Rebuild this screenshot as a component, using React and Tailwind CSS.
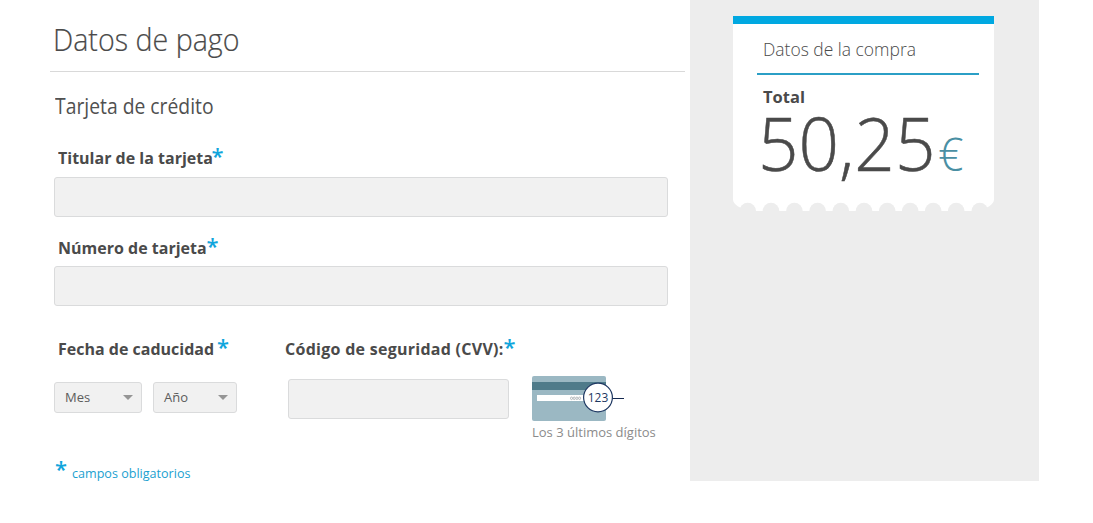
const FIELD = 'block rounded-[3px] border border-[#dadbdc] bg-[#f1f1f1] outline-none';

function Star() {
  return <span className="-mt-0.5 block text-[22px] leading-[22px] font-semibold text-[#10a5dc]">*</span>;
}

function Label({ children, width, tracking = '', htmlFor }) {
  return (
    <label htmlFor={htmlFor} className="flex h-6 items-start whitespace-nowrap text-[16.5px] leading-6 font-bold text-[#4a4a4a]">
      <span className={`block origin-left scale-x-[0.97] ${tracking} ${width}`}>{children}</span>
      <Star />
    </label>
  );
}

function Select({ children, width }) {
  return (
    <button type="button" className={`flex h-[31px] items-center justify-between rounded-[3px] border border-[#dadbdc] bg-[#f1f1f1] pr-[8px] pl-[10px] text-[13px] leading-5 text-[#5c5c5c] ${width}`}>
      <span className="mb-0.5">{children}</span>
      <svg width="10" height="5" viewBox="0 0 10 5" className="mb-px">
        <path d="M0 0h10L5 5z" fill="#959595" />
      </svg>
    </button>
  );
}

function CardPicture() {
  return (
    <svg width="93" height="46" viewBox="0 0 93 46" className="block">
      <rect x="0" y="0" width="74" height="45" rx="2" fill="#9bb8c3" />
      <rect x="0" y="6" width="74" height="8" fill="#4f7b8a" />
      <rect x="5" y="19" width="50" height="6" fill="#fff" />
      <g fill="none" stroke="#9a9fa3" strokeWidth="0.7">
        <ellipse cx="39.5" cy="22.3" rx="1" ry="1.3" />
        <ellipse cx="42.2" cy="22.3" rx="1" ry="1.3" />
        <ellipse cx="44.9" cy="22.3" rx="1" ry="1.3" />
        <ellipse cx="47.6" cy="22.3" rx="1" ry="1.3" />
      </g>
      <path d="M80 22.5h12" stroke="#14284f" strokeWidth="1" />
      <circle cx="66" cy="21.5" r="14.4" fill="#fff" stroke="#1d3761" strokeWidth="1.2" />
      <text x="66" y="26" textAnchor="middle" textLength="20.500" lengthAdjust="spacingAndGlyphs" className="font-['Open_Sans',sans-serif] text-[12.5px] font-medium" fill="#1d3761">123</text>
    </svg>
  );
}

const HOLES = [14.7, 38, 61.4, 84.6, 107.8, 131, 154.2, 177.2, 200.2, 223.2, 246.8];

function TicketEdge() {
  return (
    <svg width="261" height="15" viewBox="0 0 261 15" className="block">
      <path d="M0 0H261V4Q260.500 8.500 253 12V15H8V12Q0.500 8.500 0 4Z" fill="#fff" />
      {HOLES.map((x) => <circle key={x} cx={x} cy="15" r="8.300" fill="#ededed" />)}
    </svg>
  );
}

export default function App() {
  return (
    <div className="flex h-[523px] w-[1093px] overflow-hidden bg-white font-['Open_Sans',sans-serif]">
      <main className="w-[690px] pl-[50px]">
        <div className="h-[72px] w-[635px] border-b border-[#d9d9d9] pt-[19px] pl-[3px]">
          <h1 className="origin-left scale-x-[0.923] text-[31px] leading-10 font-light whitespace-nowrap text-[#4a4a4a] [-webkit-text-stroke:0.2px_#4a4a4a]">Datos de pago</h1>
        </div>
        <h2 className="mt-5 ml-[5px] origin-left scale-x-[0.92] text-[21px] leading-7 whitespace-nowrap text-[#505050]">Tarjeta de crédito</h2>
        <form className="pl-1">
          <div className="mt-[26px] pl-1">
            <Label htmlFor="holder" width="w-[153.500px]">Titular de la tarjeta</Label>
          </div>
          <input id="holder" className={`${FIELD} mt-[7px] h-10 w-[614px]`} />
          <div className="mt-[19px] pl-[3.500px]">
            <Label htmlFor="number" width="w-[149px]">Número de tarjeta</Label>
          </div>
          <input id="number" className={`${FIELD} mt-1.5 h-10 w-[614px]`} />
          <div className="mt-[31px] flex">
            <div className="w-[230px]">
              <div className="pl-[3.500px]">
                <Label width="w-[159.500px]">Fecha de caducidad</Label>
              </div>
              <div className="mt-[21px] flex gap-[11px]">
                <Select width="w-[88px]">Mes</Select>
                <Select width="w-[84px]">Año</Select>
              </div>
            </div>
            <div>
              <div className="pl-px">
                <Label htmlFor="cvv" width="w-[218.500px]" tracking="tracking-[0.28px]">Código de seguridad (CVV):</Label>
              </div>
              <div className="mt-[15px] flex pl-1">
                <input id="cvv" className={`${FIELD} mt-[3px] h-10 w-[221px]`} />
                <div className="ml-[23px]">
                  <CardPicture />
                  <p className="text-[13px] leading-5 whitespace-nowrap text-[#8b8b8b]">Los 3 últimos dígitos</p>
                </div>
              </div>
            </div>
          </div>
          <div className="mt-[17px] flex h-6 items-start pl-px">
            <Star />
            <p className="mt-[4px] ml-[5px] origin-left scale-x-[0.967] text-[13px] leading-5 text-[#1b9fd0]">campos obligatorios</p>
          </div>
        </form>
      </main>
      <aside className="h-[481px] w-[349px] bg-[#ededed] pt-4 pl-[43px]">
        <section className="w-[261px]">
          <div className="h-[180px] border-t-8 border-[#00a8e1] bg-white pl-6">
            <div className="h-[51px] w-[222px] border-b-2 border-[#2b9fc6] pt-[13px] pl-[5.500px]">
              <h2 className="origin-left scale-x-[0.97] text-[18px] leading-6 font-light whitespace-nowrap text-[#4a4a4a]">Datos de la compra</h2>
            </div>
            <p className="mt-2.5 ml-1.5 text-[16.5px] leading-6 font-bold text-[#4a4a4a]">Total</p>
            <div className="-mt-1.5 flex h-20 items-baseline pl-px whitespace-nowrap">
              <span className="w-[180px] origin-left scale-x-[0.96] text-[74px] leading-[80px] font-light text-[#4a4a4a] [-webkit-text-stroke:0.5px_#4a4a4a]">50,25</span>
              <span className="origin-left scale-x-[0.97] text-[46px] leading-[80px] font-light text-[#4a8fa3]">€</span>
            </div>
          </div>
          <TicketEdge />
        </section>
      </aside>
    </div>
  );
}
